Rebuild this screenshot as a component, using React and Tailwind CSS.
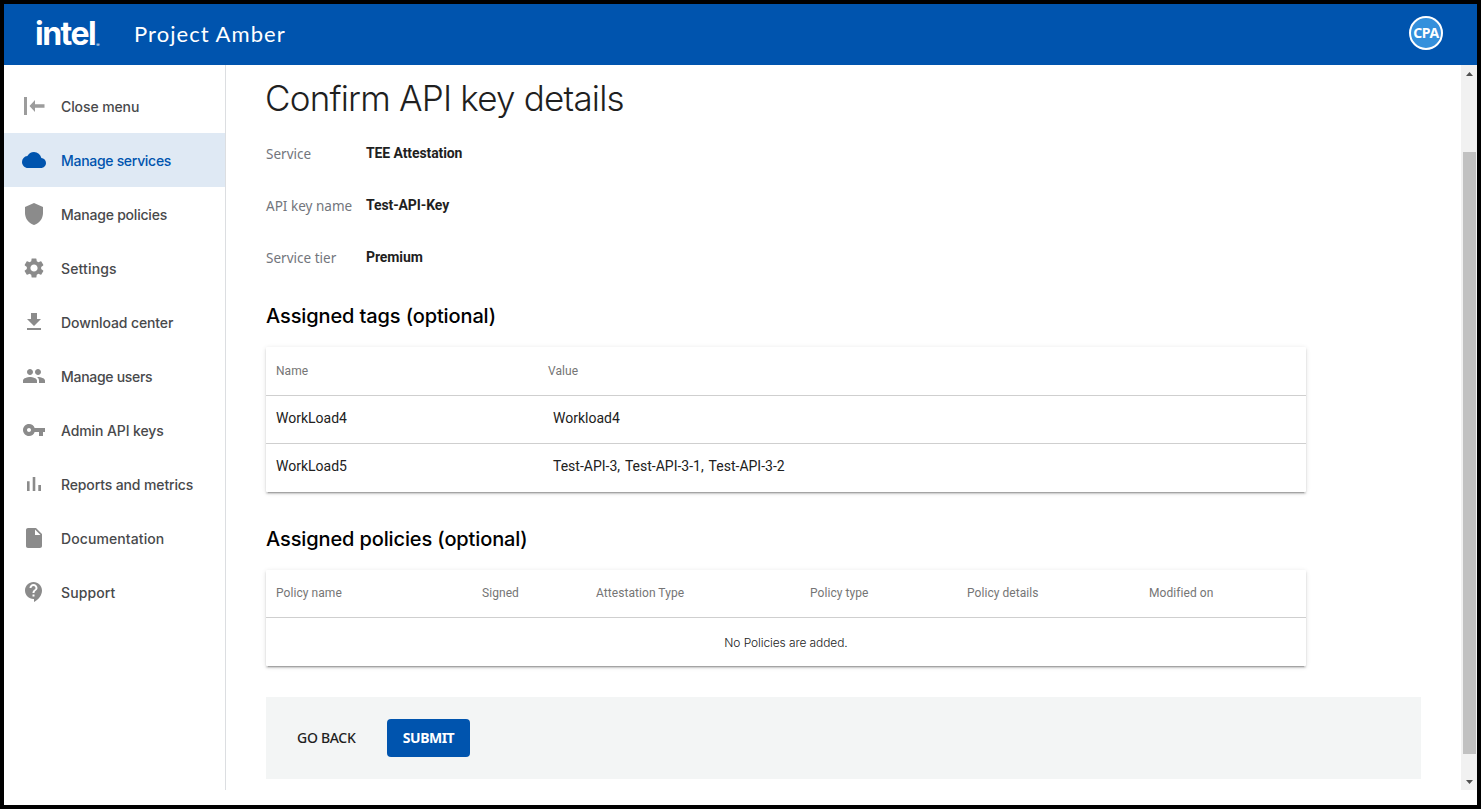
import {
  MdCloud,
  MdShield,
  MdSettings,
  MdFileDownload,
  MdPeople,
  MdVpnKey,
  MdInsertDriveFile,
  MdContactSupport,
} from "react-icons/md";

function CloseMenuIcon() {
  return (
    <svg className="h-6 w-6" viewBox="0 0 24 24" fill="currentColor" opacity="0.85">
      <path d="M2 3h3v18H2z" />
      <path d="M7.5 12l5.5-6v4.2h9.5v3.6H13V18z" />
    </svg>
  );
}

function BarsIcon() {
  return (
    <svg className="h-6 w-6" viewBox="0 0 24 24" fill="currentColor">
      <path d="M5 9.2h2.6V19H5zM10.7 5h2.6v14h-2.6zm5.6 8H19v6h-2.7z" />
    </svg>
  );
}

const NAV = [
  { label: "Close menu", Icon: CloseMenuIcon, track: "tracking-[-0.1px]" },
  { label: "Manage services", Icon: MdCloud, active: true, track: "tracking-[-0.3px]" },
  { label: "Manage policies", Icon: MdShield, track: "tracking-[-0.22px]" },
  { label: "Settings", Icon: MdSettings, track: "tracking-[0.15px]" },
  { label: "Download center", Icon: MdFileDownload, track: "tracking-[-0.1px]" },
  { label: "Manage users", Icon: MdPeople, track: "tracking-[-0.3px]" },
  { label: "Admin API keys", Icon: MdVpnKey, track: "tracking-[-0.1px]" },
  { label: "Reports and metrics", Icon: BarsIcon, track: "tracking-[-0.13px]" },
  { label: "Documentation", Icon: MdInsertDriveFile, track: "tracking-[0.1px]" },
  { label: "Support", Icon: MdContactSupport, track: "tracking-[0.1px]" },
];

const DETAILS = [
  ["Service", "TEE Attestation"],
  ["API key name", "Test-API-Key"],
  ["Service tier", "Premium"],
];

const TAGS = [
  ["WorkLoad4", "Workload4"],
  ["WorkLoad5", "Test-API-3, Test-API-3-1, Test-API-3-2"],
];

function Header() {
  return (
    <header className="flex h-[61px] shrink-0 items-center bg-[#0054ae] pl-[31px] pr-[34px] text-white">
      <div className="mb-[2px] flex w-[99px] items-end font-['Inter',sans-serif]">
        <span className="text-[32px] leading-[36px] font-bold tracking-[-1.5px]">intel</span>
        <span className="pb-[4px] pl-[1px] text-[5px] leading-[6px]">®</span>
      </div>
      <div className="mb-[2px] font-['Lato',sans-serif] text-[22px] leading-7 tracking-[1.05px]">Project Amber</div>
      <div className="mb-[3px] ml-auto flex h-[34px] w-[34px] items-center justify-center rounded-full border-2 border-white bg-[#3490dc] pb-px font-['Noto_Sans',sans-serif] text-[14px] font-bold tracking-[-0.4px]">
        CPA
      </div>
    </header>
  );
}

function Sidebar() {
  return (
    <nav className="h-[725px] w-[222px] shrink-0 border-r border-[#dcdee1] pt-[14px]">
      {NAV.map(({ label, Icon, active, track }) => (
        <div
          key={label}
          className={`flex h-[54px] items-center gap-[15px] pl-[18px] ${
            active ? "bg-[#dfe9f4] text-[#0054ae]" : "text-[#8b8b8b]"
          }`}
        >
          <Icon className="h-6 w-6 shrink-0" />
          <span
            className={`pt-[2px] font-['Inter',sans-serif] text-[14px] leading-5 font-medium whitespace-nowrap ${track} ${
              active ? "text-[#0054ae]" : "text-[#48494b]"
            }`}
          >
            {label}
          </span>
        </div>
      ))}
    </nav>
  );
}

const CARD =
  "w-[1040px] rounded-[1px] bg-white shadow-[0_3px_1px_-2px_rgba(0,0,0,0.2),0_2px_2px_0_rgba(0,0,0,0.14),0_1px_5px_0_rgba(0,0,0,0.12)]";
const HEAD = "font-['Roboto',sans-serif] text-[12px] tracking-[0.06px] text-[#757575]";
const H2 = "font-['Inter',sans-serif] text-[20px] leading-[30px] font-medium tracking-[-0.12px] text-black";

function TagsTable() {
  return (
    <div className={`${CARD} mt-[16px] h-[145px]`}>
      <div className={`grid h-[49px] grid-cols-[272px_1fr] items-center border-b border-[#cfcfcf] pl-[10px] ${HEAD}`}>
        <span>Name</span>
        <span>Value</span>
      </div>
      {TAGS.map(([name, value], i) => (
        <div
          key={name}
          className={`grid h-12 grid-cols-[277px_1fr] items-center pl-[10px] font-['Roboto',sans-serif] text-[14px] text-[#212121] ${
            i === 0 ? "border-b border-[#cfcfcf] pb-[2px]" : "pb-[4px]"
          }`}
        >
          <span>{name}</span>
          <span className="[word-spacing:1.7px]">{value}</span>
        </div>
      ))}
    </div>
  );
}

function PoliciesTable() {
  return (
    <div className={`${CARD} mt-[16px] h-[96px]`}>
      <div
        className={`grid h-12 grid-cols-[206px_114px_214px_157px_182px_1fr] items-center border-b border-[#cfcfcf] pb-[2px] pl-[10px] ${HEAD}`}
      >
        <span>Policy name</span>
        <span>Signed</span>
        <span>Attestation Type</span>
        <span>Policy type</span>
        <span>Policy details</span>
        <span>Modified on</span>
      </div>
      <div className="flex h-12 items-center justify-center pt-[2px] font-['Inter',sans-serif] text-[12px] font-light tracking-[-0.1px] text-[#212121]">
        No Policies are added.
      </div>
    </div>
  );
}

function Scrollbar() {
  return (
    <div className="flex h-[725px] w-4 shrink-0 flex-col items-center bg-[#f1f1f1]">
      <svg className="mt-[7px] h-1 w-[7px] shrink-0" viewBox="0 0 7 4" fill="#505050">
        <path d="M3.5 0L7 4H0z" />
      </svg>
      <div className="mt-[76px] h-[602px] w-[13px] shrink-0 bg-[#c1c1c1]" />
      <svg className="mt-[26px] h-1 w-[7px] shrink-0" viewBox="0 0 7 4" fill="#505050">
        <path d="M3.5 4L0 0h7z" />
      </svg>
    </div>
  );
}

export default function App() {
  return (
    <div className="flex h-[809px] w-[1481px] flex-col overflow-hidden border-4 border-black bg-white">
      <Header />
      <div className="flex flex-1">
        <Sidebar />
        <main className="flex-1 pl-10">
          <h1 className="-ml-px pt-[10px] font-['Inter',sans-serif] text-[35px] leading-[46px] font-light tracking-[-0.8px] text-[#1f1f1f]">
            Confirm API key details
          </h1>
          <dl className="mt-[6px]">
            {DETAILS.map(([label, value]) => (
              <div key={label} className="flex h-[52px] items-center">
                <dt className="w-[100px] pt-[2px] font-['Noto_Sans',sans-serif] text-[13.5px] leading-5 tracking-[0.02px] text-[#72757c]">
                  {label}
                </dt>
                <dd className="font-['Roboto',sans-serif] text-[14px] font-bold tracking-[-0.1px] text-[#1f1f1f]">
                  {value}
                </dd>
              </div>
            ))}
          </dl>
          <h2 className={`mt-[18px] ${H2}`}>Assigned tags (optional)</h2>
          <TagsTable />
          <h2 className={`mt-[32px] ${H2}`}>Assigned policies (optional)</h2>
          <PoliciesTable />
          <div className="mt-[31px] flex h-[82px] w-[1155px] items-center bg-[#f3f5f5] pl-[31px] font-['Noto_Sans',sans-serif] text-[14px]">
            <button className="w-[90px] pb-px text-left font-medium tracking-[-0.3px] text-[#1f1f1f]">GO BACK</button>
            <button className="h-[38px] w-[83px] rounded bg-[#0054ae] pb-px font-bold tracking-[-0.5px] text-white">
              SUBMIT
            </button>
          </div>
        </main>
        <Scrollbar />
      </div>
    </div>
  );
}
